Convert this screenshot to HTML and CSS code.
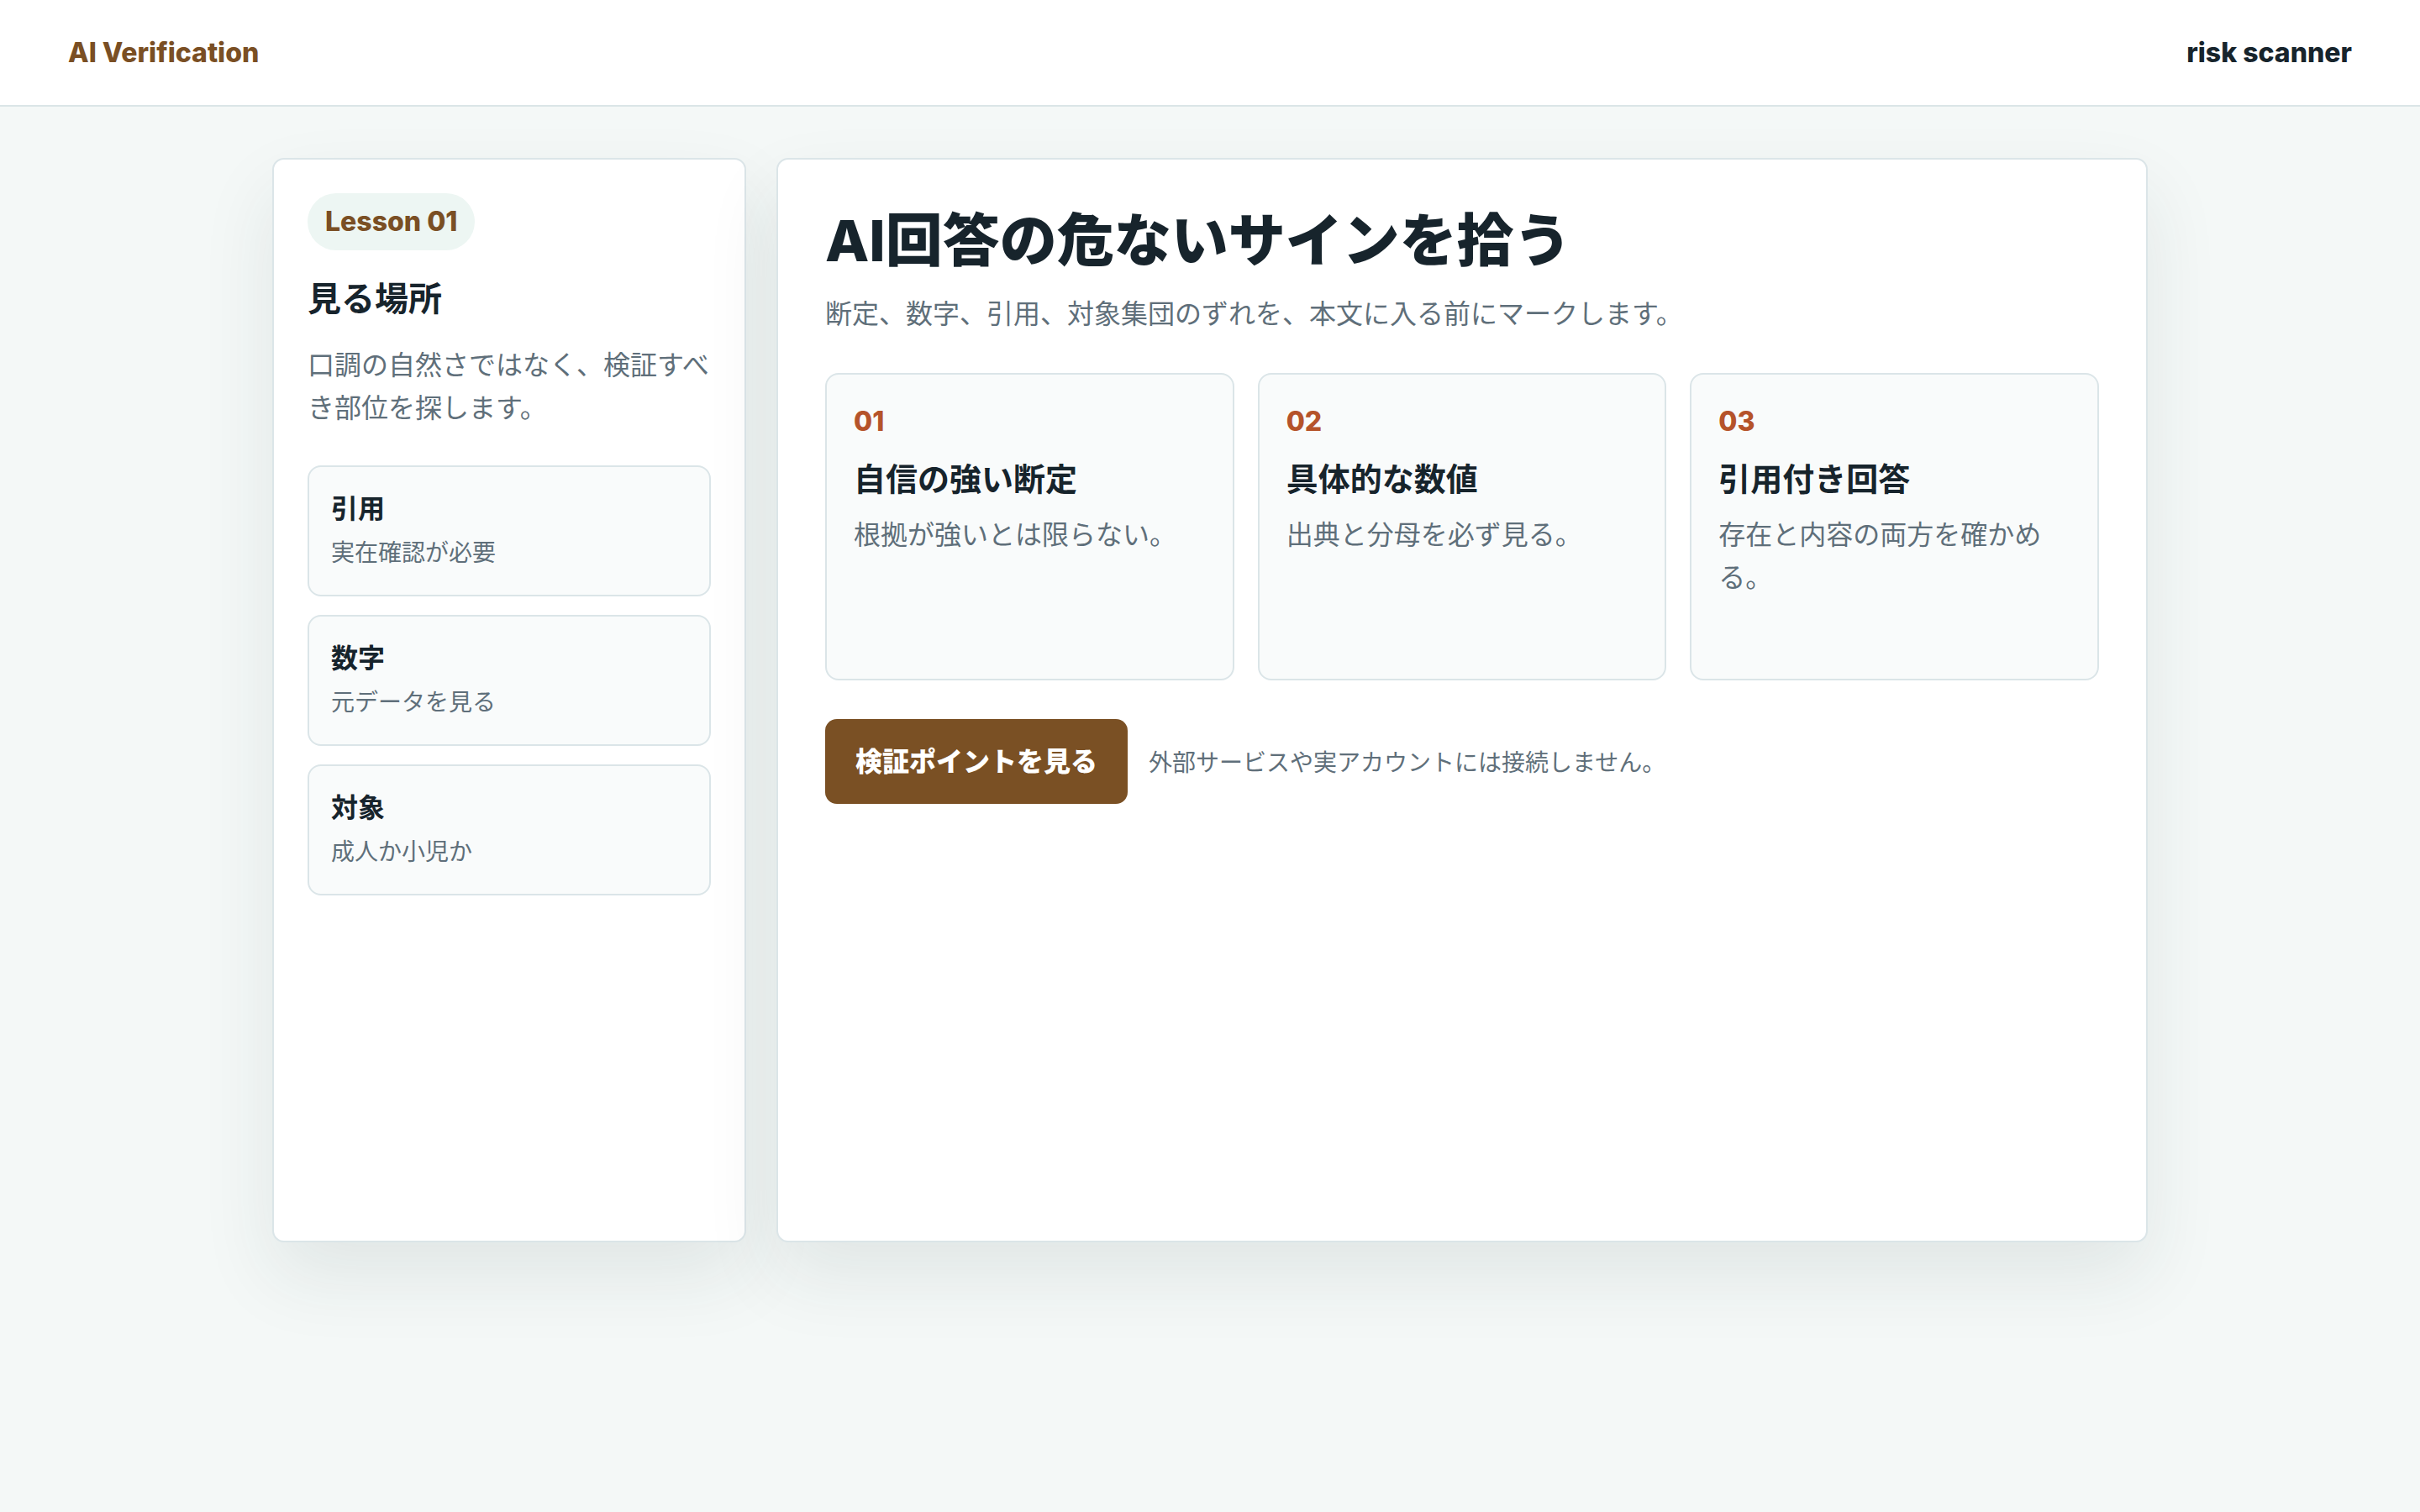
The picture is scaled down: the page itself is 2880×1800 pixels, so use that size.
FILE: index.html
```html
<!DOCTYPE html>
<html lang="ja">
<head>
  <meta charset="UTF-8" />
  <meta name="viewport" content="width=device-width, initial-scale=1.0"/>
  <title>AI Verification</title>
  <link rel="stylesheet" href="styles.css">
</head>
<body>

  <header class="topbar">
    <div class="brand">AI Verification</div>
    <div class="tool-name">risk scanner</div>
  </header>

  <main class="layout">
    <aside class="panel side">
      <span class="pill">Lesson 01</span>
      <h2 class="side-title">見る場所</h2>
      <p class="side-text">口調の自然さではなく、検証すべき部位を探します。</p>

      <div class="spots">
        <div class="spot">
          <div class="spot-title">引用</div>
          <div class="spot-note">実在確認が必要</div>
        </div>
        <div class="spot">
          <div class="spot-title">数字</div>
          <div class="spot-note">元データを見る</div>
        </div>
        <div class="spot">
          <div class="spot-title">対象</div>
          <div class="spot-note">成人か小児か</div>
        </div>
      </div>
    </aside>

    <section class="panel main">
      <h1 class="main-title">AI回答の危ないサインを拾う</h1>
      <p class="lead">断定、数字、引用、対象集団のずれを、本文に入る前にマークします。</p>

      <div class="signs">
        <div class="sign">
          <div class="sign-num">01</div>
          <h3 class="sign-title">自信の強い断定</h3>
          <p class="sign-text">根拠が強いとは限らない。</p>
        </div>
        <div class="sign">
          <div class="sign-num">02</div>
          <h3 class="sign-title">具体的な数値</h3>
          <p class="sign-text">出典と分母を必ず見る。</p>
        </div>
        <div class="sign">
          <div class="sign-num">03</div>
          <h3 class="sign-title">引用付き回答</h3>
          <p class="sign-text">存在と内容の両方を確かめる。</p>
        </div>
      </div>

      <div class="actions">
        <button class="button">検証ポイントを見る</button>
        <span class="note">外部サービスや実アカウントには接続しません。</span>
      </div>
    </section>
  </main>

</body>
</html>
```

FILE: styles.css
```css
* {
  box-sizing: border-box;
}
body {
  font-family: Inter, "Noto Sans CJK JP", sans-serif;
  background: #f4f8f7;
  color: #17242c;
  margin: 0;
  padding: 0 0 200px;
}
.topbar {
  height: 127px;
  background: #fff;
  border-bottom: 2px solid #dbe5e7;
  padding: 0 81px;
  display: flex;
  align-items: center;
  justify-content: space-between;
}
.brand {
  color: #7a4f24;
  font-size: 32px;
  font-weight: 800;
}
.tool-name {
  color: #17242c;
  font-size: 32px;
  font-weight: 800;
}
.layout {
  max-width: 2232px;
  margin: 61px auto 0;
  display: grid;
  grid-template-columns: 564px 1fr;
  gap: 36px;
}
.panel {
  background: #fff;
  border: 2px solid #dbe5e8;
  border-radius: 14px;
  min-height: 1291px;
  box-shadow: 0 40px 90px rgba(30, 52, 60, 0.09);
}
.side {
  padding: 40px 40px;
}
.pill {
  display: inline-block;
  background: #edf6f3;
  color: #7a4f24;
  font-size: 32px;
  font-weight: 800;
  line-height: 48px;
  padding: 10px 21px;
  border-radius: 40px;
}
.side-title {
  font-size: 40px;
  line-height: 56px;
  font-weight: 700;
  margin: 30px 0 0;
}
.side-text {
  font-size: 32px;
  line-height: 1.6;
  color: #5f6f7a;
  margin: 25px 0 0;
}
.spots {
  margin-top: 43px;
  display: flex;
  flex-direction: column;
  gap: 22px;
}
.spot {
  background: #f9fbfb;
  border: 2px solid #dbe5e8;
  border-radius: 16px;
  padding: 27px 26px;
}
.spot-title {
  font-size: 32px;
  font-weight: 700;
  line-height: 45px;
}
.spot-note {
  font-size: 28px;
  line-height: 45px;
  color: #5f6f7a;
  margin-top: 8px;
}
.main {
  padding: 56px;
}
.main-title {
  font-size: 68px;
  line-height: 1.2;
  font-weight: 800;
  margin: 0;
}
.lead {
  font-size: 32px;
  line-height: 1.6;
  color: #5f6f7a;
  margin: 20px 0 0;
}
.signs {
  margin-top: 45px;
  display: grid;
  grid-template-columns: repeat(3, 1fr);
  gap: 28px;
}
.sign {
  background: #f9fbfb;
  border: 2px solid #dbe5e8;
  border-radius: 16px;
  padding: 32px;
  min-height: 366px;
}
.sign-num {
  color: #b5532a;
  font-size: 32px;
  font-weight: 800;
  line-height: 48px;
}
.sign-title {
  font-size: 38px;
  line-height: 53px;
  font-weight: 700;
  margin: 18px 0 0;
}
.sign-text {
  font-size: 32px;
  line-height: 1.6;
  color: #5f6f7a;
  margin: 14px 0 0;
}
.actions {
  margin-top: 46px;
  display: flex;
  align-items: center;
  gap: 25px;
}
.button {
  font-family: inherit;
  background: #7a5024;
  color: #fff;
  font-size: 32px;
  font-weight: 800;
  line-height: 51px;
  padding: 25px 36px;
  border: none;
  border-radius: 14px;
  cursor: pointer;
}
.note {
  font-size: 28px;
  color: #5f6f7a;
}
```
